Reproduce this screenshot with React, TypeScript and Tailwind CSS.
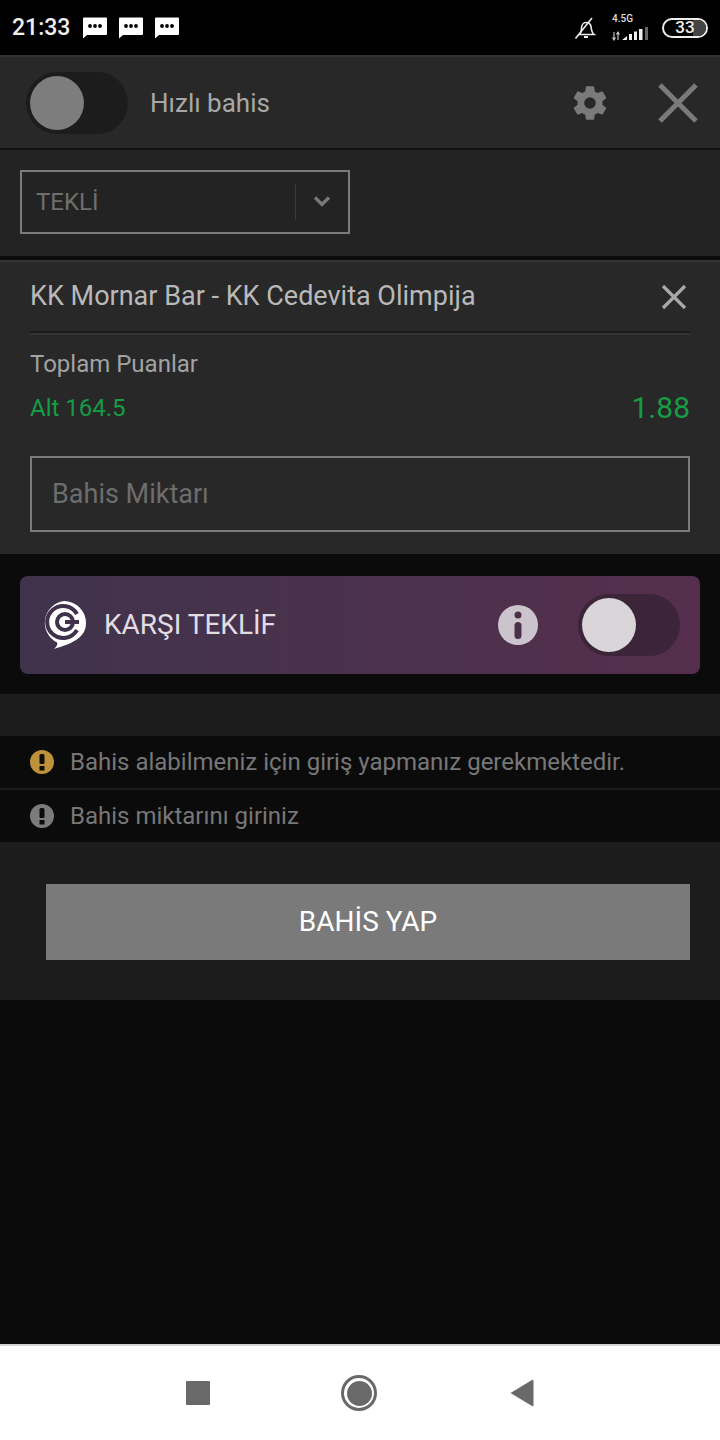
import React from "react";

const font = { fontFamily: "Roboto, sans-serif" };

function Bubble() {
  return (
    <svg width="26" height="22" viewBox="0 0 26 22" className="shrink-0">
      <path d="M1 1.5a1 1 0 0 1 1-1h22a1 1 0 0 1 1 1v15.5a1 1 0 0 1-1 1H5l-4 3.5z" fill="#fff" />
      <circle cx="8" cy="9" r="1.9" fill="#000" />
      <circle cx="13" cy="9" r="1.9" fill="#000" />
      <circle cx="18" cy="9" r="1.9" fill="#000" />
    </svg>
  );
}

function StatusBar() {
  return (
    <div className="h-[55px] bg-black flex items-center shrink-0 pl-3 pr-3">
      <span className="text-[23px] font-medium text-[#f0f0f0] leading-none w-[70px]">21:33</span>
      <div className="flex gap-[10px] ml-[0px] mt-[1px]">
        <Bubble />
        <Bubble />
        <Bubble />
      </div>
      <div className="ml-auto flex items-center">
        <svg width="24" height="24" viewBox="0 0 24 24" fill="none" stroke="#eee" strokeWidth="1.6" className="mr-[13px]">
          <path d="M5.5 18.5c1.5-1.5 2-3 2-6 0-3.5 2-6 4.5-6s4.5 1.500 5 4c.4 3.500 1 6.500 3 8z" />
          <path d="M10 21h4" strokeWidth="2" />
          <path d="M1.500 22.500 18 2" />
        </svg>
        <div className="relative w-[40px] h-[24px] mr-[11px]">
          <span className="absolute left-[1px] top-[-2px] text-[10px] font-medium leading-none text-[#ddd]">4.5G</span>
          <svg width="40" height="14" viewBox="0 0 40 14" className="absolute left-0 bottom-[-1px]">
            <path d="M3 5v8M1.500 10.500 3 13l1.500-2.500" stroke="#ccc" fill="none" strokeWidth="1.100" />
            <path d="M7 13V5M5.500 7.500 7 5l1.500 2.500" stroke="#ccc" fill="none" strokeWidth="1.100" />
            <path d="M11 13l5-4v4z" fill="#eee" />
            <rect x="18" y="7" width="3" height="6" fill="#eee" />
            <rect x="23" y="4.500" width="3" height="8.500" fill="#eee" />
            <rect x="28" y="2" width="3.500" height="11" fill="#eee" />
            <rect x="34" y="0" width="3" height="13" fill="#666" />
          </svg>
        </div>
        <div className="relative w-[46px] h-[20px] rounded-full border-2 border-[#eee] overflow-hidden flex items-center justify-center">
          <div className="absolute right-0 top-0 bottom-0 w-[13px] bg-[#444]" />
          <span className="relative text-[17px] font-medium leading-none text-[#eee]">33</span>
        </div>
      </div>
    </div>
  );
}

function Toggle({ track, knob, ring }: { track: string; knob: string; ring?: boolean }) {
  return (
    <div className={`w-[102px] h-[62px] rounded-full ${track} flex items-center pl-[4px] shrink-0`}>
      <div className={`w-[54px] h-[54px] rounded-full ${knob}`} />
    </div>
  );
}

function Alert({ color, text }: { color: string; text: string }) {
  return (
    <div className="h-[52px] bg-[#0c0b0c] flex items-center pl-[30px]">
      <svg width="24" height="24" viewBox="0 0 24 24" className="shrink-0">
        <circle cx="12" cy="12" r="12" fill={color} />
        <rect x="9.500" y="4" width="5" height="10" rx="1.500" fill="#0c0b0c" />
        <rect x="9.500" y="16" width="5" height="4.500" rx="0.500" fill="#0c0b0c" />
      </svg>
      <span className="ml-[16px] text-[24px] text-[#777777] leading-none">{text}</span>
    </div>
  );
}

export default function App() {
  return (
    <div className="w-[720px] h-[1440px] flex flex-col bg-[#0c0b0c] overflow-hidden" style={font}>
      <StatusBar />

      {/* Quick bet header */}
      <div className="h-[95px] bg-[#282828] border-t-2 border-[#333333] border-b-2 border-b-[#111111] flex items-center pl-[26px] pr-[22px] shrink-0 box-border">
        <Toggle track="bg-[#1c1c1c]" knob="bg-[#7d7d7d]" />
        <span className="ml-[22px] text-[26px] text-[#a8a8a8] leading-none">Hızlı bahis</span>
        <svg width="40" height="40" viewBox="0 0 24 24" className="ml-auto mr-[48px]" fill="#7a7a7a">
          <path
            fillRule="evenodd"
            d="M19.430 12.980c.04-.32.07-.64.07-.98s-.03-.66-.07-.98l2.110-1.650c.19-.15.24-.42.12-.64l-2-3.460c-.12-.22-.39-.3-.61-.22l-2.490 1c-.52-.4-1.080-.73-1.690-.98l-.38-2.650A.488.488 0 0 0 14 2h-4c-.25 0-.46.18-.49.420l-.38 2.650c-.61.25-1.170.59-1.690.98l-2.490-1c-.23-.09-.49 0-.61.220l-2 3.460c-.13.220-.07.490.12.640l2.110 1.650c-.04.32-.07.650-.07.980s.03.660.07.980l-2.110 1.650c-.19.150-.24.420-.12.640l2 3.460c.12.220.39.300.61.220l2.490-1c.52.400 1.080.730 1.690.980l.38 2.650c.03.240.24.420.49.420h4c.25 0 .46-.18.49-.420l.38-2.650c.61-.25 1.170-.59 1.690-.98l2.490 1c.23.090.49 0 .61-.220l2-3.460c.12-.220.07-.490-.12-.640l-2.110-1.650zM12 15.500a3.500 3.500 0 1 1 0-7 3.500 3.500 0 0 1 0 7z"
          />
        </svg>
        <svg width="40" height="40" viewBox="0 0 40 40" stroke="#7a7a7a" strokeWidth="5" fill="none">
          <path d="M2 2l36 36M38 2L2 38" />
        </svg>
      </div>

      {/* Bet type selector */}
      <div className="h-[106px] bg-[#232323] pl-[20px] pt-[20px] shrink-0">
        <div className="w-[330px] h-[64px] border-2 border-[#7b7b7b] flex items-center pl-[14px] box-border">
          <span className="text-[24px] text-[#6f6f6f] leading-none">TEKLİ</span>
          <div className="ml-auto w-px h-[36px] bg-[#3c3c3c]" />
          <svg width="52" height="20" viewBox="0 0 52 20" fill="none" stroke="#7a7a7a" strokeWidth="3.200">
            <path d="M19 5.500l7 7 7-7" />
          </svg>
        </div>
      </div>

      <div className="h-[4px] bg-[#0c0b0c] shrink-0" />

      {/* Selected match card */}
      <div className="h-[294px] bg-[#282828] border-t-2 border-[#333333] px-[30px] shrink-0 box-border">
        <div className="h-[71px] flex items-center justify-between border-b-2 border-[#1a1a1a]">
          <span className="text-[27px] text-[#b9b9b9] leading-none">KK Mornar Bar - KK Cedevita Olimpija</span>
          <svg width="26" height="26" viewBox="0 0 26 26" stroke="#a8a8ad" strokeWidth="3.200" fill="none" className="mr-[3px]">
            <path d="M2 2l22 22M24 2L2 24" />
          </svg>
        </div>
        <div className="h-[2px] bg-[#333333]" />
        <div className="mt-[17px] text-[24px] text-[#a2a2a2] leading-none">Toplam Puanlar</div>
        <div className="mt-[18px] flex items-center justify-between h-[28px]">
          <span className="text-[24px] text-[#169c45] leading-none">Alt 164.5</span>
          <span className="text-[30px] text-[#169c45] leading-none">1.88</span>
        </div>
        <div className="mt-[34px] h-[76px] border-2 border-[#7b7b7b] flex items-center pl-[20px] box-border">
          <span className="text-[27px] text-[#6d6d6d] leading-none">Bahis Miktarı</span>
        </div>
      </div>

      {/* Counter offer banner */}
      <div className="h-[140px] bg-[#0c0b0c] px-[20px] pt-[22px] shrink-0">
        <div className="h-[98px] rounded-[8px] bg-gradient-to-r from-[#3f334b] to-[#552f4d] flex items-center pl-[22px] pr-[20px]">
          <svg width="44" height="48" viewBox="0 0 44 48" className="shrink-0">
            <path d="M22 0a22 22 0 0 1 22 22c0 14-12 20-32 26 3-3 4-5 3-6.500A22 22 0 0 1 22 0z" fill="#fff" />
            <path d="M35 29A16 16 0 1 1 35 13" fill="none" stroke="#40324a" strokeWidth="4" />
            <circle cx="23" cy="21" r="8" fill="none" stroke="#40324a" strokeWidth="4" />
            <path d="M23 21h14" stroke="#40324a" strokeWidth="4" />
          </svg>
          <span className="ml-[18px] text-[28px] text-[#e2dde3] leading-none">KARŞI TEKLİF</span>
          <svg width="40" height="40" viewBox="0 0 40 40" className="ml-auto mr-[40px]">
            <circle cx="20" cy="20" r="20" fill="#cbc4cd" />
            <circle cx="20" cy="10" r="3.500" fill="#4c3049" />
            <rect x="16.500" y="17" width="7" height="17" rx="3.500" fill="#4c3049" />
          </svg>
          <Toggle track="bg-[#3c2539]" knob="bg-[#d9d5d9]" />
        </div>
      </div>

      {/* Warnings */}
      <div className="h-[42px] bg-[#1c1c1c] shrink-0" />
      <Alert color="#bd9238" text="Bahis alabilmeniz için giriş yapmanız gerekmektedir." />
      <div className="h-[2px] bg-[#1c1c1c] shrink-0" />
      <Alert color="#7b7b7b" text="Bahis miktarını giriniz" />

      {/* Submit action */}
      <div className="h-[158px] bg-[#1c1c1c] pl-[46px] pr-[30px] pt-[42px] shrink-0">
        <div className="h-[76px] bg-[#7a7a7a] flex items-center justify-center">
          <span className="text-[28px] text-white leading-none">BAHİS YAP</span>
        </div>
      </div>

      <div className="flex-1" />

      {/* Navigation bar */}
      <div className="h-[96px] bg-white border-t-2 border-[#d4d4d4] flex items-center justify-center shrink-0 box-border">
        <div className="w-[24px] h-[24px] bg-[#696969] rounded-[1px] mr-[131px]" />
        <div className="w-[36px] h-[36px] rounded-full border-[3px] border-[#696969] flex items-center justify-center mr-[133px]">
          <div className="w-[25px] h-[25px] rounded-full bg-[#696969]" />
        </div>
        <svg width="24" height="28" viewBox="0 0 24 28">
          <path d="M0.500 14 22 1a1 1 0 0 1 1.500 1v24a1 1 0 0 1-1.500 1z" fill="#696969" />
        </svg>
      </div>
    </div>
  );
}
